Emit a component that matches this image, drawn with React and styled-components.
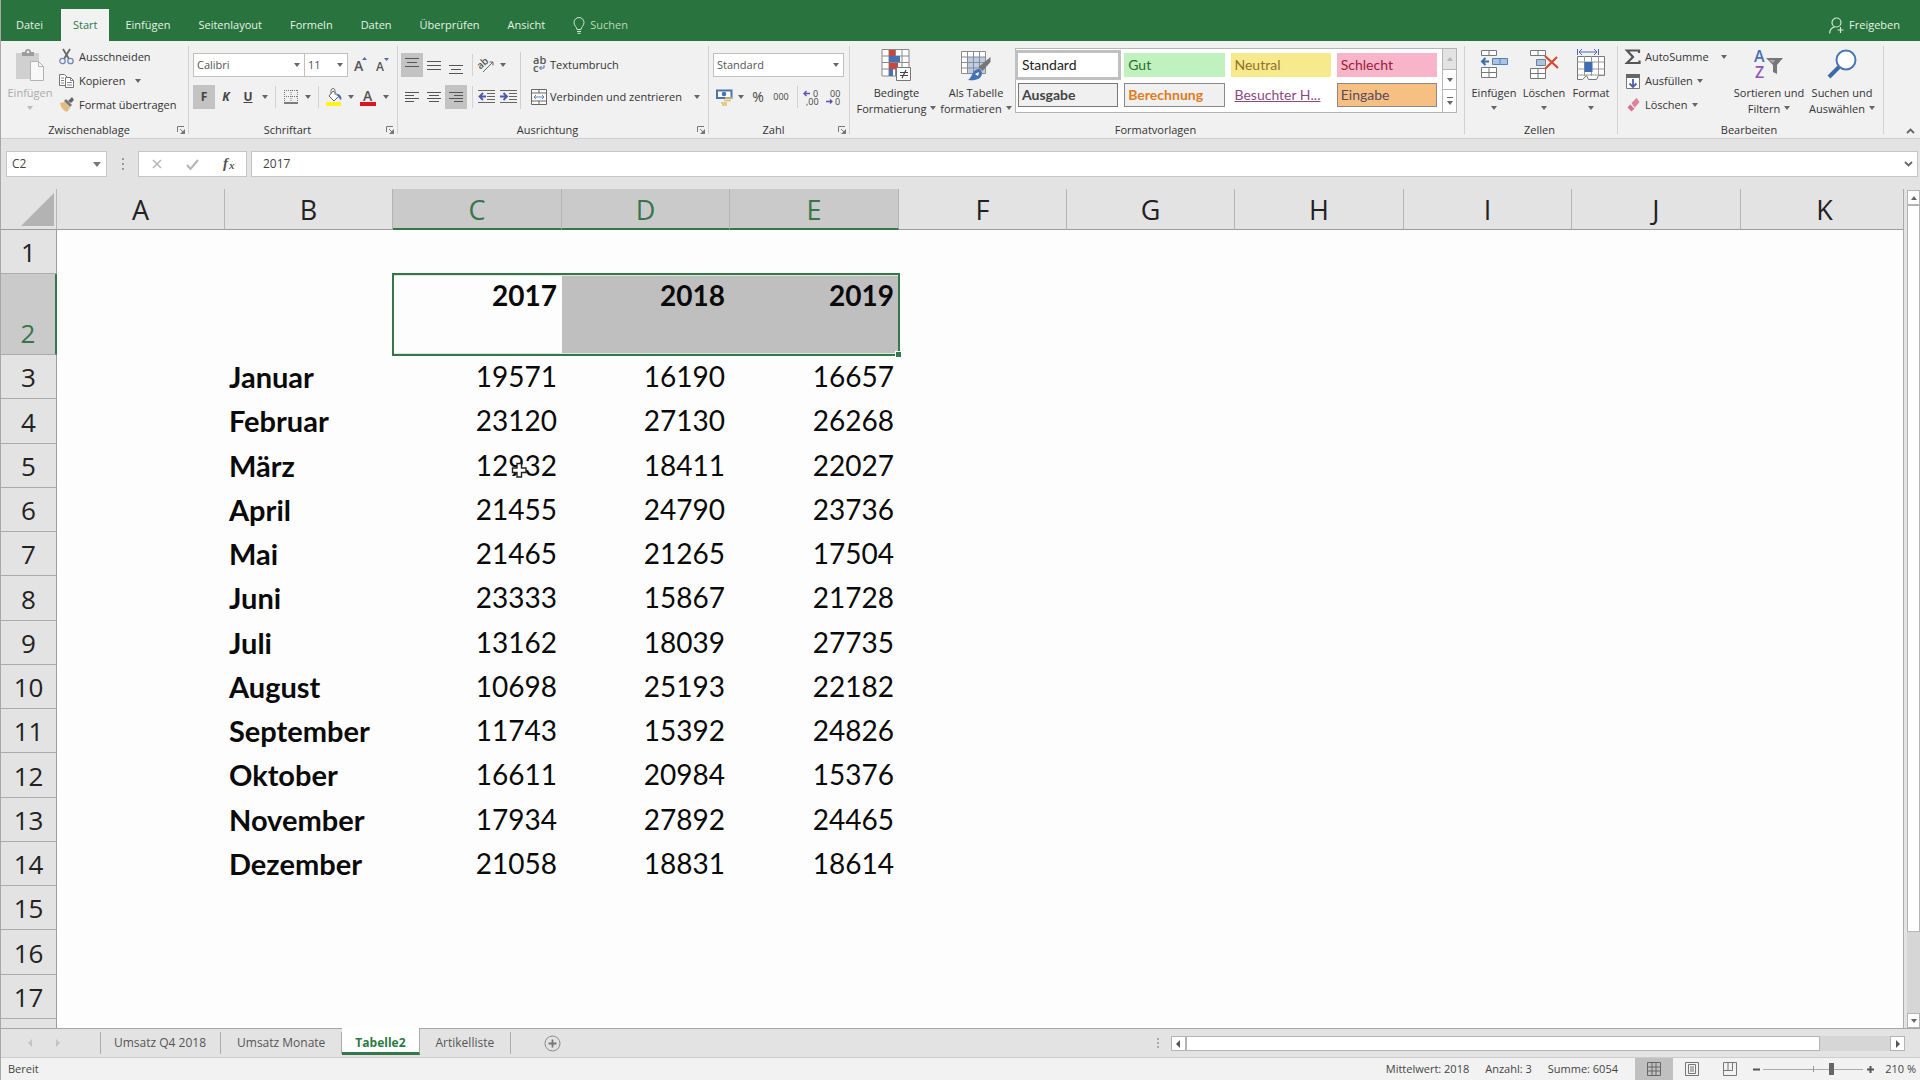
import React from "react";
import styled, { createGlobalStyle, css } from "styled-components";

const GlobalStyle = createGlobalStyle`
  * {
    box-sizing: border-box;
  }
  body {
    margin: 0;
    background: #e3e3e3;
    color: #333;
    font-family: "Open Sans", "Noto Sans", sans-serif;
    font-size: 11px;
    line-height: 16px;
  }
  button, input, select {
    margin: 0;
    padding: 0;
    border: 0;
    background: none;
    color: inherit;
    font: inherit;
  }
`;

const Window = styled.div`
  display: flex;
  flex-direction: column;
  height: 100vh;
  border-left: 1px solid #a8a8a8;
  overflow: hidden;
`;

/* ---------- menu bar ---------- */

const MenuBar = styled.header`
  display: flex;
  flex: none;
  height: 41px;
  padding: 9px 20px 0 1px;
  background: #28733e;
  color: #e4f3e4;
`;
const Menu = styled.nav`
  display: flex;
  flex: 1;
`;
const MenuTab = styled.button`
  padding: 0 14px;
  white-space: nowrap;
  ${({ $first }) => $first && "margin-right: 4px;"}
  ${({ $active }) =>
    $active &&
    css`
      margin-right: 2px;
      padding: 0 12px;
      background: #f2f2f2;
      color: #2c7a4b;
    `}
`;
const BarButton = styled.button`
  display: flex;
  align-items: center;
  gap: 5px;
  margin-left: 14px;
  color: ${({ $dim }) => ($dim ? "#b9dcbc" : "#e4f3e4")};
`;

/* ---------- ribbon ---------- */

const Ribbon = styled.section`
  display: flex;
  flex: none;
  height: 98px;
  border-bottom: 1px solid #cfcfcf;
  background: #f1f1f1;
`;
const Group = styled.div`
  display: flex;
  flex-direction: column;
  flex: 0 1 ${({ $width }) => $width}px;
`;
const GroupBody = styled.div`
  display: flex;
  height: 80px;
  padding: 0 ${({ $right }) => $right || 0}px 0 ${({ $left }) => $left || 4}px;
`;
const GroupFooter = styled.div`
  display: flex;
  height: 17px;
  align-items: center;
  padding-right: 3px;
`;
const GroupLabel = styled.div`
  flex: 1;
  text-align: center;
`;
const Divider = styled.div`
  flex: none;
  width: 1px;
  margin: 5px 0 4px;
  background: #d2d2d2;
`;
const Collapse = styled.button`
  display: flex;
  flex: 1;
  align-items: flex-end;
  justify-content: center;
  padding: 0 0 4px 16px;
`;
const BigButton = styled.button`
  display: flex;
  flex: none;
  flex-direction: column;
  align-items: center;
  width: ${({ $width }) => $width}px;
  padding-top: 8px;
  white-space: nowrap;
  color: ${({ disabled }) => (disabled ? "#ababab" : "#333")};
  svg:first-child {
    margin-bottom: 3px;
  }
`;
const BigLine = styled.span`
  display: flex;
  align-items: center;
  gap: 4px;
  height: 16px;
`;
const SmallColumn = styled.div`
  display: flex;
  flex-direction: column;
  width: ${({ $width }) => $width}px;
  padding-top: 4px;
`;
const SmallButton = styled.button`
  display: flex;
  align-items: center;
  gap: 4px;
  height: 24px;
  padding-left: 3px;
  white-space: nowrap;
`;
const CaretSpace = styled.span`
  margin-left: ${({ $space }) => $space}px;
`;
const Tools = styled.div`
  display: flex;
  flex-direction: column;
  flex: ${({ $grow }) => ($grow ? 1 : "none")};
  gap: 8px;
  padding-top: 12px;
`;
const ToolRow = styled.div`
  display: flex;
  align-items: center;
  height: 24px;
`;
const Tool = styled.button`
  display: flex;
  flex: none;
  align-items: center;
  justify-content: center;
  width: ${({ $wide }) => ($wide ? 24 : 22)}px;
  height: 24px;
  background: ${({ $on }) => ($on ? "#c3c3c3" : "none")};
  color: #444;
  font-size: ${({ $size }) => $size || 12}px;
  font-weight: ${({ $bold }) => ($bold ? 700 : 400)};
  font-style: ${({ $italic }) => ($italic ? "italic" : "normal")};
  text-decoration: ${({ $underline }) => ($underline ? "underline" : "none")};
`;
const CaretTool = styled.button`
  display: flex;
  flex: none;
  align-items: center;
  justify-content: center;
  width: 11px;
  height: 24px;
`;
const ToolSplit = styled.div`
  width: 1px;
  height: 22px;
  margin: 0 2px 0 5px;
  background: #d2d2d2;
`;
const LongSplit = styled.div`
  width: 1px;
  height: 57px;
  margin: 11px 4px 0 1px;
  background: #cfcfcf;
`;
const LabelTool = styled.button`
  display: flex;
  flex: 1;
  align-items: center;
  gap: 3px;
  height: 24px;
  padding-left: 6px;
  white-space: nowrap;
`;
const ComboBox = styled.label`
  display: grid;
  align-items: center;
  width: ${({ $width }) => $width}px;
  height: 24px;
  margin-right: -1px;
  border: 1px solid #c0c0c0;
  background: #fff;
  color: #555;
  select {
    grid-area: 1 / 1;
    width: 100%;
    padding-left: 3px;
    appearance: none;
    outline: 0;
  }
  svg {
    grid-area: 1 / 1;
    justify-self: end;
    margin-right: 4px;
    pointer-events: none;
  }
`;

const Gallery = styled.div`
  display: flex;
  flex: 1;
  height: 65px;
  margin: 7px 0 0 2px;
  border: 1px solid #b5b5b5;
  background: #fff;
`;
const GalleryGrid = styled.div`
  display: grid;
  flex: 1;
  grid-template-columns: repeat(4, 1fr);
  grid-auto-rows: 24px;
  gap: 6px;
  padding: 4px 5px 0 2px;
`;
const StyleItem = styled.button`
  overflow: hidden;
  padding-left: 3px;
  border: 1px solid ${({ $line }) => $line || "transparent"};
  outline: ${({ $selected }) => ($selected ? "3px solid #c0c0c0" : "none")};
  background: ${({ $fill }) => $fill};
  color: ${({ $ink }) => $ink};
  font-family: Lato, "Open Sans", sans-serif;
  font-size: 14px;
  font-weight: ${({ $bold }) => ($bold ? 700 : 400)};
  text-align: left;
  text-decoration: ${({ $underline }) => ($underline ? "underline" : "none")};
  white-space: nowrap;
`;
const GalleryScroll = styled.div`
  display: grid;
  grid-template-rows: 21px 20px 1fr;
  width: 14px;
  border-left: 1px solid #b5b5b5;
  button {
    display: grid;
    place-items: center;
    border-bottom: 1px solid #b5b5b5;
  }
  button:disabled {
    background: #e3e3e3;
  }
  button:last-child {
    border-bottom: 0;
  }
`;

/* ---------- formula bar ---------- */

const FormulaBar = styled.section`
  display: flex;
  flex: none;
  height: 50px;
  padding: 12px 2px 12px 5px;
`;
const Field = styled.div`
  display: flex;
  align-items: center;
  width: ${({ $width }) => ($width ? `${$width}px` : "auto")};
  flex: ${({ $width }) => ($width ? "none" : 1)};
  height: 26px;
  margin-right: ${({ $gap }) => $gap || 0}px;
  border: 1px solid #c6c6c6;
  background: #fff;
  color: #444;
  input {
    flex: 1;
    min-width: 0;
    padding-left: ${({ $indent }) => $indent || 0}px;
    font-size: 12px;
    outline: 0;
  }
  button {
    display: grid;
    place-items: center;
    height: 24px;
  }
`;
const FieldButton = styled.button`
  flex: ${({ $narrow }) => ($narrow ? "none" : 1)};
  width: ${({ $narrow }) => ($narrow ? 18 : 36)}px;
`;
const Dots = styled.div`
  display: grid;
  place-items: center;
  width: 31px;
`;

/* ---------- grid ---------- */

const SheetArea = styled.main`
  display: flex;
  flex: 1;
  min-height: 0;
  border-bottom: 1px solid #a6a6a6;
`;
const SheetView = styled.div`
  flex: 1;
  min-width: 0;
  overflow: hidden;
  border-right: 1px solid #ababab;
  background: #fdfdfd;
`;
const Sheet = styled.table`
  width: calc(100% + 6px);
  table-layout: fixed;
  border-spacing: 0;
  font-size: 28px;
`;
const ColumnHead = styled.th`
  height: 41px;
  padding: 2px 0 0;
  border-right: 1px solid #b4b4b4;
  border-bottom: ${({ $selected }) => ($selected ? "2px solid #37764b" : "1px solid #9c9c9c")};
  background: ${({ $selected }) => ($selected ? "#cacaca" : "#e3e3e3")};
  color: ${({ $selected }) => ($selected ? "#37764b" : "#222")};
  font-size: 27px;
  font-weight: 400;
  line-height: 36px;
`;
const Corner = styled.td`
  padding: 0 2px 0 0;
  border-right: 1px solid #b4b4b4;
  border-bottom: 1px solid #9c9c9c;
  background: #e3e3e3;
  button {
    display: block;
    margin-left: auto;
  }
`;
const RowHead = styled.th`
  height: ${({ $height }) => $height}px;
  padding: 0;
  border-right: ${({ $selected }) => ($selected ? "2px solid #37764b" : "1px solid #9c9c9c")};
  border-bottom: 1px solid #ababab;
  background: ${({ $selected }) => ($selected ? "#cacaca" : "#e3e3e3")};
  color: ${({ $selected }) => ($selected ? "#37764b" : "#222")};
  font-size: 26px;
  font-weight: 400;
  line-height: 42px;
  vertical-align: bottom;
`;
const Cell = styled.td`
  position: relative;
  padding: 0 5px 0 4px;
  color: #0a0a0a;
  font-family: Lato, "Open Sans", sans-serif;
  font-size: ${({ $left }) => ($left ? 29 : 28)}px;
  font-weight: ${({ $bold }) => ($bold ? 700 : 400)};
  line-height: 43px;
  text-align: ${({ $left }) => ($left ? "left" : "right")};
  vertical-align: top;
  white-space: nowrap;
  ${({ $fill }) =>
    $fill &&
    css`
      background: #bfbfbf;
    `}
  ${({ $edge }) =>
    $edge &&
    css`
      &::after {
        content: "";
        position: absolute;
        inset: -1px ${$edge === "end" ? "-1px" : "0"} -1px ${$edge === "start" ? "-1px" : "0"};
        border: solid #37764b;
        border-width: 2px ${$edge === "end" ? "2px" : "0"} 2px ${$edge === "start" ? "2px" : "0"};
        box-shadow: inset 0 1px #d8ebdb, inset 0 -1px #d8ebdb;
      }
    `}
`;
const FillHandle = styled.span`
  position: absolute;
  z-index: 1;
  right: -3px;
  bottom: -3px;
  width: 7px;
  height: 7px;
  border: 1px solid #fff;
  background: #37764b;
`;
const Pointer = styled.svg`
  position: absolute;
  left: 118px;
  top: 18px;
`;
const VerticalScroll = styled.div`
  display: flex;
  flex: none;
  flex-direction: column;
  width: 16px;
  padding: 1px 0 0 3px;
`;
const ScrollButton = styled.button`
  display: grid;
  flex: none;
  place-items: center;
  width: ${({ $square }) => ($square ? "15px" : "auto")};
  height: 15px;
  border: 1px solid #b4b4b4;
  background: #fff;
`;
const Track = styled.div`
  display: flex;
  flex: 1;
  flex-direction: ${({ $vertical }) => ($vertical ? "column" : "row")};
  background: #d6d6d6;
`;
const Thumb = styled.div`
  flex: 0 0 ${({ $share }) => $share}%;
  border: 1px solid #b4b4b4;
  background: #fff;
`;

/* ---------- sheet tabs and status ---------- */

const SheetBar = styled.div`
  display: flex;
  flex: none;
  height: 29px;
  border-bottom: 1px solid #cdcdcd;
  color: #555;
  font-size: 12px;
`;
const SheetNav = styled.div`
  display: flex;
  align-items: center;
  justify-content: center;
  gap: 24px;
  width: 99px;
  padding-right: 14px;
`;
const SheetTab = styled.button`
  height: 22px;
  margin-top: 3px;
  padding: 0 16px;
  border-right: 1px solid #ababab;
  white-space: nowrap;
  ${({ $first }) => $first && "padding: 0 14px 0 13px; border-left: 1px solid #ababab;"}
  ${({ $active }) =>
    $active &&
    css`
      height: 27px;
      margin: -1px 0 0;
      padding: 5px 13px 0;
      border-bottom: 3px solid #37764b;
      background: #fff;
      color: #2c7a3f;
      font-weight: 700;
    `}
`;
const AddSheet = styled.button`
  display: grid;
  place-items: center;
  width: 82px;
`;
const HorizontalScroll = styled.div`
  display: flex;
  width: 39%;
  height: 15px;
  margin: 7px 15px 0 auto;
`;
const ScrollGrip = styled.div`
  width: 14px;
`;
const StatusBar = styled.footer`
  display: flex;
  flex: none;
  align-items: center;
  height: 22px;
  padding: 0 4px 0 7px;
  background: #f2f2f2;
  color: #444;
`;
const Stats = styled.div`
  display: flex;
  flex: 1;
  justify-content: flex-end;
  gap: 16px;
  padding-right: 17px;
`;
const ReadyState = styled.div``;
const ViewButton = styled.button`
  display: grid;
  place-items: center;
  width: 38px;
  height: 22px;
  background: ${({ $on }) => ($on ? "#c0c0c0" : "none")};
`;
const ZoomButton = styled.button`
  display: grid;
  place-items: center;
  width: 14px;
  height: 22px;
`;
const ZoomSlider = styled.input`
  width: 100px;
  height: 12px;
  appearance: none;
  background:
    linear-gradient(#999, #999) center / 1px 6px no-repeat,
    linear-gradient(#aaa, #aaa) center / 100% 1px no-repeat;
  &::-webkit-slider-thumb {
    width: 5px;
    height: 12px;
    appearance: none;
    background: #666;
  }
`;
const ZoomValue = styled.div`
  width: 39px;
  text-align: right;
  white-space: nowrap;
`;

/* ---------- icons ---------- */

const Svg = styled.svg`
  display: block;
  flex: none;
  overflow: visible;
`;
const Icon = ({ w = 16, h = 16, children }) => (
  <Svg width={w} height={h} viewBox={`0 0 ${w} ${h}`} fill="none" aria-hidden="true">
    {children}
  </Svg>
);

const Caret = ({ color = "#666" }) => (
  <Icon w={6} h={4}>
    <path d="M0 0h6L3 4z" fill={color} />
  </Icon>
);
const CaretUp = ({ color = "#666" }) => (
  <Icon w={6} h={4}>
    <path d="M0 4h6L3 0z" fill={color} />
  </Icon>
);
const ArrowSide = ({ left, color = "#555" }) => (
  <Icon w={4} h={8}>
    <path d={left ? "M4 0v8L0 4z" : "M0 0v8l4-4z"} fill={color} />
  </Icon>
);
const LauncherIcon = () => (
  <Icon w={8} h={8}>
    <path d="M.5 6V.5H7M3 3l3 3" stroke="#777" />
    <path d="M8 3v5H3z" fill="#777" />
  </Icon>
);
const BulbIcon = () => (
  <Icon w={12} h={17}>
    <path d="M4 12.500C4 10 1 9 1 5.500a5 5 0 0 1 10 0C11 9 8 10 8 12.500zM4 14.500h4M4.500 16.300h3" stroke="#cfe9cf" />
  </Icon>
);
const ShareIcon = () => (
  <Icon w={15} h={17}>
    <circle cx="7.500" cy="5.500" r="4.500" stroke="#d4ecd4" strokeWidth="1.200" />
    <path d="M.7 16.500c0-4 2-6 5-6.700M11.500 10v6M8.500 13h6" stroke="#d4ecd4" strokeWidth="1.200" />
  </Icon>
);
const PasteIcon = () => (
  <Icon w={30} h={33}>
    <path d="M1 4h23v26H1z" fill="#d0d0d0" />
    <path d="M7 3h3a3 3 0 0 1 6 0h3v4H7z" fill="#9d9d9d" />
    <circle cx="13" cy="3" r="1.300" fill="#f1f1f1" />
    <path d="M15.500 12.500h8l5 5v14h-13z" fill="#f8f8f8" stroke="#b3b3b3" />
    <path d="M23.500 12.500v5h5" stroke="#b3b3b3" />
  </Icon>
);
const CutIcon = () => (
  <Icon>
    <path d="M4 0l6 10M11 0L5 10" stroke="#666" strokeWidth="1.800" />
    <circle cx="3.500" cy="12" r="2.700" stroke="#7189b5" strokeWidth="1.300" />
    <circle cx="11.500" cy="12" r="2.700" stroke="#7189b5" strokeWidth="1.300" />
  </Icon>
);
const CopyIcon = () => (
  <Icon>
    <path d="M.5 1.500h5l3 3v8h-8z" fill="#fff" stroke="#777" />
    <path d="M2 5h3M2 7.500h3M2 10h3" stroke="#888" />
    <path d="M6.500 4.500h5l3 3v7h-8z" fill="#fff" stroke="#777" />
    <path d="M11.500 4.500v3h3M8 9.500h5M8 12h5" stroke="#888" />
  </Icon>
);
const PainterIcon = () => (
  <Icon>
    <path d="M1 6l5-1 5 6-3 4c-3-1-6-4-7-9z" fill="#e3bd80" />
    <path d="M5 4l2-2 6 6-2 2z" fill="#777" />
    <path d="M9 4l4-4 2 3-3 3z" fill="#666" />
  </Icon>
);
const GrowFontIcon = ({ down }) => (
  <Icon w={14} h={16}>
    <text x={down ? 1 : 2} y="14" fontSize={down ? 12 : 14} fontWeight="600" fill="#555">
      A
    </text>
    <path d={down ? "M9 1h5l-2.500 3z" : "M10 3h5l-2.500-3z"} fill="#5468a8" />
  </Icon>
);
const BordersIcon = () => (
  <Icon w={14} h={14}>
    <path d="M1.500 0v12M14.500 0v12M8 0v12M1 .5h14M1 6.500h14" stroke="#777" strokeDasharray="1 1" />
    <path d="M1 13h14" stroke="#555" strokeWidth="1.500" />
  </Icon>
);
const FillIcon = () => (
  <Icon w={16} h={18}>
    <path d="M8 3l6 5-5 5-5-5z" fill="#fff" stroke="#666" />
    <path d="M6 6V2.500a2 2 0 0 1 4 0V7" stroke="#777" />
    <path d="M13 6c3 1 4 4 3 6-2-1-2-4-5-5z" fill="#4a6db0" />
    <path d="M1 14h15v4H1z" fill="#fbf51a" />
  </Icon>
);
const FontColorIcon = () => (
  <Icon w={16} h={18}>
    <text x="3" y="13" fontSize="14" fontWeight="600" fill="#555">
      A
    </text>
    <path d="M0 14h16v4H0z" fill="#dc1420" />
  </Icon>
);

const ALIGN_LINES = {
  top: [[0, 14, 0], [2, 10, 4], [0, 14, 8]],
  middle: [[0, 14, 3], [0, 14, 7], [0, 14, 11]],
  bottom: [[0, 14, 9], [2, 10, 13], [0, 14, 17]],
  left: [[0, 14, 2], [0, 9, 5], [0, 14, 8], [0, 9, 11]],
  center: [[0, 14, 2], [2, 10, 5], [0, 14, 8], [2, 10, 11]],
  right: [[0, 14, 2], [5, 9, 5], [0, 14, 8], [5, 9, 11]],
};
const AlignIcon = ({ kind }) => (
  <Icon w={14} h={kind === "bottom" ? 18 : 14}>
    {ALIGN_LINES[kind].map(([x, width, y]) => (
      <rect key={y} x={x} y={y} width={width} height="1" fill="#555" />
    ))}
  </Icon>
);
const OrientationIcon = () => (
  <Icon>
    <text x="0" y="9" fontSize="10" fontWeight="600" fill="#555" transform="rotate(-42 6 8)">
      ab
    </text>
    <path d="M5 15L15 5M11.500 5H15v3.500" stroke="#666" />
  </Icon>
);
const IndentIcon = ({ out }) => (
  <Icon w={17} h={16}>
    <path d="M0 1.500h17M9 4.500h8M9 7.500h8M9 10.500h8M0 13.500h17" stroke="#666" />
    <path
      d={out ? "M8 7.500H2M5 4L1.500 7.500 5 11" : "M0 7.500h6M3.500 4L7 7.500 3.500 11"}
      stroke="#4a5ba5"
      strokeWidth="1.800"
    />
  </Icon>
);
const WrapIcon = () => (
  <Icon w={16} h={18}>
    <text x="2" y="8" fontSize="11" fontWeight="600" fill="#555">
      ab
    </text>
    <text x="2" y="16" fontSize="11" fontWeight="600" fill="#555">
      c
    </text>
    <path d="M13 9v3H8.500M10.500 10l-2 2 2 2" stroke="#5468a8" />
  </Icon>
);
const MergeIcon = () => (
  <Icon>
    <path d="M.5.500h15v15H.500zM.5 4h15M.5 12h15M8 0v4M8 12v4" fill="#fff" stroke="#666" />
    <path d="M3 8h10M5 6L3 8l2 2M11 6l2 2-2 2" stroke="#5b84b5" />
  </Icon>
);
const CurrencyIcon = () => (
  <Icon w={17} h={17}>
    <path d="M1 1.500h14.500V9H1z" fill="#fff" stroke="#4a74ad" strokeWidth="2" />
    <circle cx="8" cy="5" r="2.300" fill="#4a74ad" />
    <path d="M9 9h7M8 11.500h7M5 14h6M6 16h5" stroke="#e2bd6c" strokeWidth="1.600" />
  </Icon>
);
const DecimalIcon = ({ less }) => (
  <Icon w={16} h={17}>
    <text x={less ? 5 : 10} y="8" fontSize="9" fill="#444">
      {less ? "00" : "0"}
    </text>
    <text x={less ? 10 : 3} y="16" fontSize="9" fill="#444">
      {less ? "0" : ",00"}
    </text>
    <path
      d={less ? "M1 12.500h6M5 10.500l2 2-2 2" : "M7 4.500H1M3.500 2L1 4.500 3.500 7"}
      stroke="#5b50b8"
      strokeWidth="1.300"
    />
  </Icon>
);
const ConditionalIcon = () => (
  <Icon w={31} h={33}>
    <path d="M1 1h27v26H1z" fill="#fff" />
    <path d="M1 .5h27V27H1zM1 7h27M1 13.500h27M1 20h27M8 0v27M14.500 0v27M21 0v27" stroke="#888" />
    <path d="M8 1h6v6H8zM8 14h9v6H8z" fill="#c8483f" />
    <path d="M8 7h11v6H8zM8 20h4v7H8z" fill="#4672b4" />
    <path d="M15.500 18.500h14v13h-14z" fill="#fff" stroke="#777" />
    <path d="M19 23.500h8M19 26.500h8M25 21l-4 8" stroke="#444" strokeWidth="1.200" />
  </Icon>
);
const TableStyleIcon = () => (
  <Icon w={30} h={33}>
    <path d="M.5 2.500h24v22H.5z" fill="#fff" />
    <path d="M7 8h18v16H7z" fill="#bccbe8" />
    <path d="M.5 2.500h24v22H.5zM.5 8h24M.5 13.500h24M.5 19h24M6.500 2v22M12.500 2v22M18.500 2v22" stroke="#8b8b8b" />
    <path d="M29.500 8v5l-8 9-4-4z" fill="#777" />
    <path d="M17 20c3 0 4 2 4 5-1 5-6 7-14 6 4-2 4-10 10-11z" fill="#4672b4" />
    <path d="M14 25l4-2-1 4z" fill="#fff" />
  </Icon>
);
const InsertCellsIcon = () => (
  <Icon w={28} h={33}>
    <path d="M1.500 1.500h15v5h-15zM9 1v6M1.500 18.500h15v10h-15zM1.500 23.500h15M9 18v11" fill="#fff" stroke="#777" />
    <path d="M12.500 9.500h15v6h-15z" fill="#a9c4e2" stroke="#5580ad" />
    <path d="M20 9v6" stroke="#5580ad" />
    <path d="M9 12.500H2M5.500 9L2 12.500 5.500 16" stroke="#3b6da8" strokeWidth="2" />
  </Icon>
);
const DeleteCellsIcon = () => (
  <Icon w={30} h={33}>
    <path d="M1.500 1.500h15v5h-15zM9 1v6M1.500 19.500h15v10h-15zM1.500 24.500h15M9 19v11" fill="#fff" stroke="#777" />
    <path d="M7.500 10.500h9v6h-9z" fill="#a9c4e2" stroke="#6d8097" />
    <path d="M16 7l13 12M28 8L16 20" stroke="#d2492f" strokeWidth="2.200" />
  </Icon>
);
const FormatCellsIcon = () => (
  <Icon w={30} h={33}>
    <path d="M1.500 0v6M22.500 0v6M3 3h18M6 0L3 3l3 3M18 0l3 3-3 3" stroke="#4a68b0" />
    <path d="M1.500 7.500h27v19h-6l-2 4h-8l-2-4-4 4h-5z" fill="#fff" stroke="#777" />
    <path d="M1.500 13h27M1.500 20h27M8.500 7v20M15.500 7v20M22.500 7v20M1.500 26h27" stroke="#999" />
    <path d="M8.500 13h8v10h-8z" fill="#3e6db5" />
  </Icon>
);
const SumIcon = () => (
  <Icon>
    <path d="M14 4V1.500H2L8 8l-6 6h12.500V11.500" stroke="#555" strokeWidth="2.200" />
  </Icon>
);
const FillDownIcon = () => (
  <Icon w={16} h={17}>
    <path d="M1.500 1.500h13v14h-13z" fill="#fff" stroke="#777" />
    <path d="M1 1h14v4H1z" fill="#666" />
    <path d="M8 6v8M4.500 10.500L8 14l3.500-3.500" stroke="#4a5fb0" strokeWidth="1.800" />
  </Icon>
);
const EraserIcon = () => (
  <Icon>
    <path d="M6.500 6l5-5 3 4-5 6z" fill="#e0809c" />
    <path d="M5.500 7l4 4.500-3 3-4-4z" fill="#d9708f" />
    <path d="M5 6.500l5 5" stroke="#fff" />
  </Icon>
);
const SortIcon = () => (
  <Icon w={30} h={33}>
    <text x="0" y="13" fontSize="16" fontWeight="600" fill="#4a6fb3">
      A
    </text>
    <text x="1" y="29" fontSize="16" fontWeight="600" fill="#8e56b8">
      Z
    </text>
    <path d="M12 9h17l-6 7v9l-4-2v-7z" fill="#777" />
    <path d="M15 11h6l-2 3z" fill="#aaa" />
  </Icon>
);
const FindIcon = () => (
  <Icon w={30} h={33}>
    <path d="M12 18L2 28" stroke="#4069a8" strokeWidth="4" />
    <circle cx="19" cy="11" r="9.500" fill="#fff" stroke="#4877b8" strokeWidth="2" />
  </Icon>
);

/* ---------- data ---------- */

const MENU = ["Datei", "Start", "Einfügen", "Seitenlayout", "Formeln", "Daten", "Überprüfen", "Ansicht"];

const CELL_STYLES = [
  { name: "Standard", fill: "#fff", ink: "#222", selected: true },
  { name: "Gut", fill: "#c0f2c0", ink: "#2c6e2c" },
  { name: "Neutral", fill: "#f7ea8c", ink: "#94702a" },
  { name: "Schlecht", fill: "#f8b4c8", ink: "#98203c" },
  { name: "Ausgabe", fill: "#f0f0f1", ink: "#444", line: "#777", bold: true },
  { name: "Berechnung", fill: "#f0f0f1", ink: "#e07b20", line: "#888", bold: true },
  { name: "Besuchter H...", fill: "#fff", ink: "#8c4a80", underline: true },
  { name: "Eingabe", fill: "#f7c083", ink: "#5a4a60", line: "#888" },
];

const COLUMNS = [
  { name: "A", width: 168 },
  { name: "B", width: 168 },
  { name: "C", width: 169 },
  { name: "D", width: 168 },
  { name: "E", width: 169 },
  { name: "F", width: 168 },
  { name: "G", width: 168 },
  { name: "H", width: 169 },
  { name: "I", width: 168 },
  { name: "J", width: 169 },
  { name: "K" },
];
const SELECTED_COLUMNS = { C: "start", D: "middle", E: "end" };

const ROWS = [
  [],
  ["", 2017, 2018, 2019],
  ["Januar", 19571, 16190, 16657],
  ["Februar", 23120, 27130, 26268],
  ["März", 12932, 18411, 22027],
  ["April", 21455, 24790, 23736],
  ["Mai", 21465, 21265, 17504],
  ["Juni", 23333, 15867, 21728],
  ["Juli", 13162, 18039, 27735],
  ["August", 10698, 25193, 22182],
  ["September", 11743, 15392, 24826],
  ["Oktober", 16611, 20984, 15376],
  ["November", 17934, 27892, 24465],
  ["Dezember", 21058, 18831, 18614],
  [],
  [],
  [],
  [],
];
const SELECTED_ROW = 2;

const rowHeight = (number) => {
  if (number === SELECTED_ROW) return 81;
  return number % 4 === 0 ? 45 : 44;
};

/* ---------- parts ---------- */

const RibbonGroup = ({ label, width, left, right, launcher, children }) => (
  <>
    <Group $width={width}>
      <GroupBody $left={left} $right={right}>
        {children}
      </GroupBody>
      <GroupFooter>
        <GroupLabel>{label}</GroupLabel>
        {launcher && (
          <button aria-label={`${label} öffnen`}>
            <LauncherIcon />
          </button>
        )}
      </GroupFooter>
    </Group>
    <Divider />
  </>
);

const DropCaret = ({ label }) => (
  <CaretTool aria-label={label}>
    <Caret />
  </CaretTool>
);

const Combo = ({ label, width, value }) => (
  <ComboBox $width={width}>
    <select aria-label={label} defaultValue={value}>
      <option>{value}</option>
    </select>
    <Caret />
  </ComboBox>
);

const ClipboardGroup = () => (
  <RibbonGroup label="Zwischenablage" width={187} left={3} launcher>
    <BigButton $width={52} disabled>
      <PasteIcon />
      <BigLine>Einfügen</BigLine>
      <BigLine>
        <Caret color="#bbb" />
      </BigLine>
    </BigButton>
    <SmallColumn $width={124}>
      <SmallButton>
        <CutIcon />
        Ausschneiden
      </SmallButton>
      <SmallButton>
        <CopyIcon />
        Kopieren
        <CaretSpace $space={6}>
          <Caret />
        </CaretSpace>
      </SmallButton>
      <SmallButton>
        <PainterIcon />
        Format übertragen
      </SmallButton>
    </SmallColumn>
  </RibbonGroup>
);

const FontGroup = () => (
  <RibbonGroup label="Schriftart" width={208} launcher>
    <Tools>
      <ToolRow>
        <Combo label="Schriftart" width={112} value="Calibri" />
        <Combo label="Schriftgrad" width={44} value="11" />
        <Tool $wide aria-label="Schrift vergrößern">
          <GrowFontIcon />
        </Tool>
        <Tool aria-label="Schrift verkleinern">
          <GrowFontIcon down />
        </Tool>
      </ToolRow>
      <ToolRow>
        <Tool $on $bold>F</Tool>
        <Tool $bold $italic>K</Tool>
        <Tool $bold $underline>U</Tool>
        <DropCaret label="Unterstreichung" />
        <ToolSplit />
        <Tool $wide aria-label="Rahmen">
          <BordersIcon />
        </Tool>
        <DropCaret label="Rahmenarten" />
        <ToolSplit />
        <Tool $wide aria-label="Füllfarbe">
          <FillIcon />
        </Tool>
        <DropCaret label="Füllfarben" />
        <Tool $wide aria-label="Schriftfarbe">
          <FontColorIcon />
        </Tool>
        <DropCaret label="Schriftfarben" />
      </ToolRow>
    </Tools>
  </RibbonGroup>
);

const AlignGroup = () => (
  <RibbonGroup label="Ausrichtung" width={310} left={3} right={6} launcher>
    <Tools>
      <ToolRow>
        <Tool $on aria-label="Oben"><AlignIcon kind="top" /></Tool>
        <Tool aria-label="Mitte"><AlignIcon kind="middle" /></Tool>
        <Tool aria-label="Unten"><AlignIcon kind="bottom" /></Tool>
        <ToolSplit />
        <Tool aria-label="Drehung"><OrientationIcon /></Tool>
        <DropCaret label="Drehungen" />
      </ToolRow>
      <ToolRow>
        <Tool aria-label="Linksbündig"><AlignIcon kind="left" /></Tool>
        <Tool aria-label="Zentriert"><AlignIcon kind="center" /></Tool>
        <Tool $on aria-label="Rechtsbündig"><AlignIcon kind="right" /></Tool>
        <ToolSplit />
        <Tool aria-label="Einzug verkleinern"><IndentIcon out /></Tool>
        <Tool aria-label="Einzug vergrößern"><IndentIcon /></Tool>
      </ToolRow>
    </Tools>
    <LongSplit />
    <Tools $grow>
      <ToolRow>
        <LabelTool>
          <WrapIcon />
          Textumbruch
        </LabelTool>
      </ToolRow>
      <ToolRow>
        <LabelTool>
          <MergeIcon />
          Verbinden und zentrieren
        </LabelTool>
        <DropCaret label="Verbindungsarten" />
      </ToolRow>
    </Tools>
  </RibbonGroup>
);

const NumberGroup = () => (
  <RibbonGroup label="Zahl" width={140} launcher>
    <Tools>
      <ToolRow>
        <Combo label="Zahlenformat" width={131} value="Standard" />
      </ToolRow>
      <ToolRow>
        <Tool aria-label="Buchhaltung">
          <CurrencyIcon />
        </Tool>
        <DropCaret label="Währungen" />
        <Tool $wide $size={14}>%</Tool>
        <Tool $size={9}>000</Tool>
        <ToolSplit />
        <Tool aria-label="Dezimalstelle hinzufügen">
          <DecimalIcon />
        </Tool>
        <Tool aria-label="Dezimalstelle entfernen">
          <DecimalIcon less />
        </Tool>
      </ToolRow>
    </Tools>
  </RibbonGroup>
);

const StylesGroup = () => (
  <RibbonGroup label="Formatvorlagen" width={614} right={7}>
    <BigButton $width={85}>
      <ConditionalIcon />
      <BigLine>Bedingte</BigLine>
      <BigLine>
        Formatierung <Caret />
      </BigLine>
    </BigButton>
    <BigButton $width={74}>
      <TableStyleIcon />
      <BigLine>Als Tabelle</BigLine>
      <BigLine>
        formatieren <Caret />
      </BigLine>
    </BigButton>
    <Gallery>
      <GalleryGrid>
        {CELL_STYLES.map((s) => (
          <StyleItem
            key={s.name}
            $fill={s.fill}
            $ink={s.ink}
            $line={s.line}
            $bold={s.bold}
            $selected={s.selected}
            $underline={s.underline}
          >
            {s.name}
          </StyleItem>
        ))}
      </GalleryGrid>
      <GalleryScroll>
        <button disabled aria-label="Vorherige Zeile">
          <CaretUp color="#b5b5b5" />
        </button>
        <button aria-label="Nächste Zeile">
          <Caret />
        </button>
        <button aria-label="Weitere">
          <Icon w={6} h={8}>
            <path d="M0 .5h6" stroke="#666" />
            <path d="M0 4h6L3 8z" fill="#666" />
          </Icon>
        </button>
      </GalleryScroll>
    </Gallery>
  </RibbonGroup>
);

const CellsGroup = () => (
  <RibbonGroup label="Zellen" width={152}>
    <BigButton $width={50}>
      <InsertCellsIcon />
      <BigLine>Einfügen</BigLine>
      <BigLine>
        <Caret />
      </BigLine>
    </BigButton>
    <BigButton $width={50}>
      <DeleteCellsIcon />
      <BigLine>Löschen</BigLine>
      <BigLine>
        <Caret />
      </BigLine>
    </BigButton>
    <BigButton $width={44}>
      <FormatCellsIcon />
      <BigLine>Format</BigLine>
      <BigLine>
        <Caret />
      </BigLine>
    </BigButton>
  </RibbonGroup>
);

const EditGroup = () => (
  <RibbonGroup label="Bearbeiten" width={265}>
    <SmallColumn $width={110}>
      <SmallButton>
        <SumIcon />
        AutoSumme
        <CaretSpace $space={8}>
          <Caret />
        </CaretSpace>
      </SmallButton>
      <SmallButton>
        <FillDownIcon />
        Ausfüllen <Caret />
      </SmallButton>
      <SmallButton>
        <EraserIcon />
        Löschen <Caret />
      </SmallButton>
    </SmallColumn>
    <BigButton $width={74}>
      <SortIcon />
      <BigLine>Sortieren und</BigLine>
      <BigLine>
        Filtern <Caret />
      </BigLine>
    </BigButton>
    <BigButton $width={72}>
      <FindIcon />
      <BigLine>Suchen und</BigLine>
      <BigLine>
        Auswählen <Caret />
      </BigLine>
    </BigButton>
  </RibbonGroup>
);

const SheetRow = ({ number, values }) => {
  const selected = number === SELECTED_ROW;
  return (
    <tr>
      <RowHead scope="row" $selected={selected} $height={rowHeight(number)}>
        {number}
      </RowHead>
      {COLUMNS.map(({ name }, i) => {
        const edge = selected && SELECTED_COLUMNS[name];
        return (
          <Cell
            key={name}
            $left={name === "B"}
            $bold={name === "B" || selected}
            $edge={edge}
            $fill={edge && edge !== "start"}
          >
            {values[i - 1]}
            {edge === "end" && <FillHandle />}
            {number === 5 && name === "C" && (
              <Pointer width="17" height="17" viewBox="0 0 17 17" aria-hidden="true">
                <path
                  d="M6 1.500h4.500v4.500H15v4.500h-4.500V15H6v-4.500H1.500V6H6z"
                  fill="#fff"
                  stroke="#222"
                  strokeWidth="1.400"
                />
              </Pointer>
            )}
          </Cell>
        );
      })}
    </tr>
  );
};

const App = () => {
  return (
    <Window>
      <GlobalStyle />
      <MenuBar>
        <Menu>
          {MENU.map((name, i) => (
            <MenuTab key={name} $first={i === 0} $active={name === "Start"}>
              {name}
            </MenuTab>
          ))}
          <BarButton $dim>
            <BulbIcon />
            Suchen
          </BarButton>
        </Menu>
        <BarButton>
          <ShareIcon />
          Freigeben
        </BarButton>
      </MenuBar>

      <Ribbon>
        <ClipboardGroup />
        <FontGroup />
        <AlignGroup />
        <NumberGroup />
        <StylesGroup />
        <CellsGroup />
        <EditGroup />
        <Collapse aria-label="Menüband reduzieren">
          <Icon w={9} h={6}>
            <path d="M1 5l3.500-3.500L8 5" stroke="#666" strokeWidth="1.800" />
          </Icon>
        </Collapse>
      </Ribbon>

      <FormulaBar>
        <Field $width={101} $indent={5}>
          <input aria-label="Namenfeld" defaultValue="C2" />
          <FieldButton $narrow aria-label="Namen anzeigen">
            <Icon w={8} h={5}>
              <path d="M0 0h8L4 5z" fill="#777" />
            </Icon>
          </FieldButton>
        </Field>
        <Dots>
          <Icon w={2} h={12}>
            <path d="M0 1h2M0 6h2M0 11h2" stroke="#999" strokeWidth="2" />
          </Icon>
        </Dots>
        <Field $width={109} $gap={4}>
          <FieldButton aria-label="Abbrechen">
            <Icon w={10} h={10}>
              <path d="M1 1l8 8M9 1L1 9" stroke="#b5b5b5" strokeWidth="1.500" />
            </Icon>
          </FieldButton>
          <FieldButton aria-label="Eingeben">
            <Icon w={13} h={11}>
              <path d="M1 6l3.500 4L12 1" stroke="#b5b5b5" strokeWidth="2" />
            </Icon>
          </FieldButton>
          <FieldButton aria-label="Funktion einfügen">
            <Icon w={12} h={16}>
              <text x="1" y="12" fontFamily="Liberation Serif, serif" fontStyle="italic" fontWeight="700" fontSize="15" fill="#555">
                f
              </text>
              <text x="7" y="13" fontFamily="Liberation Serif, serif" fontStyle="italic" fontWeight="700" fontSize="11" fill="#555">
                x
              </text>
            </Icon>
          </FieldButton>
        </Field>
        <Field $indent={11}>
          <input aria-label="Bearbeitungsleiste" defaultValue="2017" />
          <FieldButton $narrow aria-label="Erweitern">
            <Icon w={9} h={6}>
              <path d="M1 1l3.500 3.500L8 1" stroke="#666" strokeWidth="1.800" />
            </Icon>
          </FieldButton>
        </Field>
      </FormulaBar>

      <SheetArea>
        <SheetView>
          <Sheet>
            <colgroup>
              <col width="56" />
              {COLUMNS.map(({ name, width }) => (
                <col key={name} width={width} />
              ))}
            </colgroup>
            <thead>
              <tr>
                <Corner>
                  <button aria-label="Alles markieren">
                    <Icon w={33} h={33}>
                      <path d="M33 0v33H0z" fill="#b3b3b3" />
                    </Icon>
                  </button>
                </Corner>
                {COLUMNS.map(({ name }) => (
                  <ColumnHead key={name} scope="col" $selected={name in SELECTED_COLUMNS}>
                    {name}
                  </ColumnHead>
                ))}
              </tr>
            </thead>
            <tbody>
              {ROWS.map((values, i) => (
                <SheetRow key={i} number={i + 1} values={values} />
              ))}
            </tbody>
          </Sheet>
        </SheetView>
        <VerticalScroll>
          <ScrollButton aria-label="Nach oben">
            <CaretUp />
          </ScrollButton>
          <Track $vertical>
            <Thumb $share={90} />
          </Track>
          <ScrollButton aria-label="Nach unten">
            <Caret />
          </ScrollButton>
        </VerticalScroll>
      </SheetArea>

      <SheetBar>
        <SheetNav>
          <ArrowSide left color="#c4c4c4" />
          <ArrowSide color="#c4c4c4" />
        </SheetNav>
        <SheetTab $first>Umsatz Q4 2018</SheetTab>
        <SheetTab>Umsatz Monate</SheetTab>
        <SheetTab $active>Tabelle2</SheetTab>
        <SheetTab>Artikelliste</SheetTab>
        <AddSheet aria-label="Neues Blatt">
          <Icon w={17} h={17}>
            <circle cx="8.500" cy="8.500" r="7.500" stroke="#888" />
            <path d="M8.500 4.500v8M4.500 8.500h8" stroke="#777" strokeWidth="1.800" />
          </Icon>
        </AddSheet>
        <HorizontalScroll>
          <ScrollGrip>
            <Icon w={2} h={15}>
              <path d="M0 3h2M0 7h2M0 11h2" stroke="#aaa" strokeWidth="2" />
            </Icon>
          </ScrollGrip>
          <ScrollButton $square aria-label="Nach links">
            <ArrowSide left />
          </ScrollButton>
          <Track>
            <Thumb $share={90} />
          </Track>
          <ScrollButton $square aria-label="Nach rechts">
            <ArrowSide />
          </ScrollButton>
        </HorizontalScroll>
      </SheetBar>

      <StatusBar>
        <ReadyState>Bereit</ReadyState>
        <Stats>
          <span>Mittelwert: 2018</span>
          <span>Anzahl: 3</span>
          <span>Summe: 6054</span>
        </Stats>
        <ViewButton $on aria-label="Normal">
          <Icon w={14} h={14}>
            <path d="M.5.500h13v13H.500zM.5 5h13M.5 9h13M5 .5v13M9 .5v13" stroke="#666" />
          </Icon>
        </ViewButton>
        <ViewButton aria-label="Seitenlayout">
          <Icon w={14} h={14}>
            <path d="M.5.500h13v13H.500zM3.500 2.500h7v9h-7zM5 5h4M5 7h4M5 9h4" stroke="#777" />
          </Icon>
        </ViewButton>
        <ViewButton aria-label="Umbruchvorschau">
          <Icon w={14} h={14}>
            <path d="M.5.500h13v13H.500zM.5 8.500h9v-8M5 .5v8" stroke="#777" />
          </Icon>
        </ViewButton>
        <ZoomButton aria-label="Verkleinern">
          <Icon w={7} h={7}>
            <path d="M0 3.500h7" stroke="#555" strokeWidth="2" />
          </Icon>
        </ZoomButton>
        <ZoomSlider type="range" aria-label="Zoom" min="0" max="100" defaultValue="69" />
        <ZoomButton aria-label="Vergrößern">
          <Icon w={7} h={7}>
            <path d="M0 3.500h7M3.500 0v7" stroke="#555" strokeWidth="2" />
          </Icon>
        </ZoomButton>
        <ZoomValue>210 %</ZoomValue>
      </StatusBar>
    </Window>
  );
};

export default App;
